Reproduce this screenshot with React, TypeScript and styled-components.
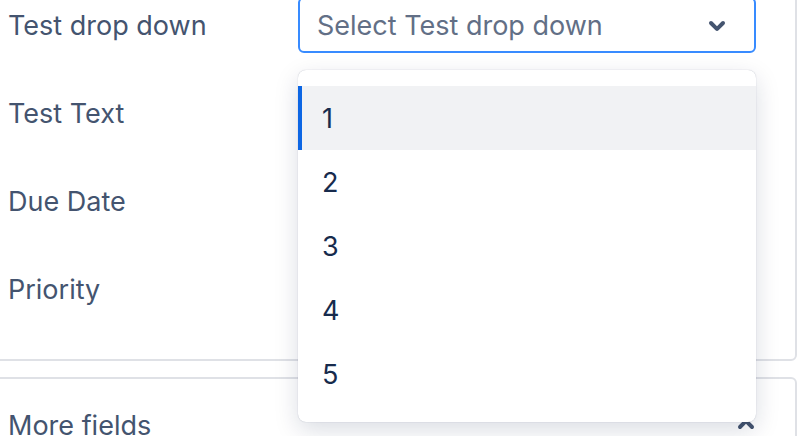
import styled, { createGlobalStyle } from "styled-components";

const GlobalStyle = createGlobalStyle`
  html, body {
    margin: 0;
    padding: 0;
    background: #ffffff;
    overflow: hidden;
  }
  body {
    font-family: Inter, "Noto Sans", "Liberation Sans", sans-serif;
    -webkit-font-smoothing: antialiased;
  }
`;

const Page = styled.div`
  width: 804px;
  height: 436px;
  overflow: hidden;
`;

const Panel = styled.section<{ $top: number; $padRight: number }>`
  margin-top: ${(p) => p.$top}px;
  margin-left: -10px;
  width: 807px;
  box-sizing: border-box;
  border: 2px solid #dfe1e6;
  border-radius: 6px;
  padding: 0 ${(p) => p.$padRight}px 0 16px;
  background: #ffffff;
`;

const FieldList = styled.div`
  padding-bottom: 26px;
`;

const FieldRow = styled.div`
  display: grid;
  grid-template-columns: 290px 458px;
  align-items: center;
  height: 88px;
`;

const Label = styled.span`
  font-size: 27px;
  color: #44546f;
  line-height: 1;
`;

const SelectWrap = styled.div`
  position: relative;
`;

const SelectBox = styled.div`
  display: flex;
  align-items: center;
  justify-content: space-between;
  height: 56px;
  box-sizing: border-box;
  border: 2px solid #388bff;
  border-radius: 6px;
  padding: 0 13px 0 17px;
  background: #ffffff;
`;

const Placeholder = styled.span`
  font-size: 27px;
  color: #626f86;
`;

const Menu = styled.ul`
  position: absolute;
  top: calc(100% + 17px);
  left: 0;
  width: 458px;
  margin: 0;
  padding: 16px 0;
  list-style: none;
  box-sizing: border-box;
  background: #ffffff;
  border-radius: 8px;
  box-shadow: 0 8px 24px rgba(9, 30, 66, 0.15), 0 0 1px rgba(9, 30, 66, 0.31);
  z-index: 10;
`;

const Option = styled.li<{ $active?: boolean }>`
  display: flex;
  align-items: center;
  height: 64px;
  padding-left: 24px;
  font-size: 27px;
  color: #172b4d;
  background: ${(p) => (p.$active ? "#f1f2f4" : "transparent")};
  box-shadow: ${(p) => (p.$active ? "inset 4px 0 0 #0c66e4" : "none")};
`;

const SectionHeader = styled.div`
  display: flex;
  align-items: center;
  justify-content: space-between;
  height: 88px;
  padding-top: 2px;
`;

function ChevronDown() {
  return (
    <svg width="48" height="48" viewBox="0 0 24 24">
      <path
        d="M8.292 10.293a1.009 1.009 0 000 1.419l2.939 2.965c.218.215.5.322.779.322s.556-.107.769-.322l2.93-2.955a1.01 1.01 0 000-1.419.987.987 0 00-1.406 0l-2.298 2.317-2.307-2.327a.99.99 0 00-1.406 0z"
        fill="#44546f"
      />
    </svg>
  );
}

function ChevronUp() {
  return (
    <svg width="48" height="48" viewBox="0 0 24 24">
      <path
        d="M11.221 9.322l-2.929 2.955a1.009 1.009 0 000 1.419.986.986 0 001.405 0l2.298-2.317 2.307 2.327a.989.989 0 001.407 0 1.01 1.01 0 000-1.419l-2.94-2.965A1.1 1.1 0 0011.991 9c-.28 0-.557.107-.77.322z"
        fill="#44546f"
      />
    </svg>
  );
}

const options = ["1", "2", "3", "4", "5"];

export default function App() {
  return (
    <Page>
      <GlobalStyle />
      <Panel $top={-21} $padRight={39}>
        <FieldList>
          <FieldRow>
            <Label>Test drop down</Label>
            <SelectWrap>
              <SelectBox>
                <Placeholder>Select Test drop down</Placeholder>
                <ChevronDown />
              </SelectBox>
              <Menu>
                {options.map((o, i) => (
                  <Option key={o} $active={i === 0}>
                    {o}
                  </Option>
                ))}
              </Menu>
            </SelectWrap>
          </FieldRow>
          <FieldRow>
            <Label>Test Text</Label>
          </FieldRow>
          <FieldRow>
            <Label>Due Date</Label>
          </FieldRow>
          <FieldRow>
            <Label>Priority</Label>
          </FieldRow>
        </FieldList>
      </Panel>
      <Panel $top={16} $padRight={25}>
        <SectionHeader>
          <Label>More fields</Label>
          <ChevronUp />
        </SectionHeader>
      </Panel>
    </Page>
  );
}
